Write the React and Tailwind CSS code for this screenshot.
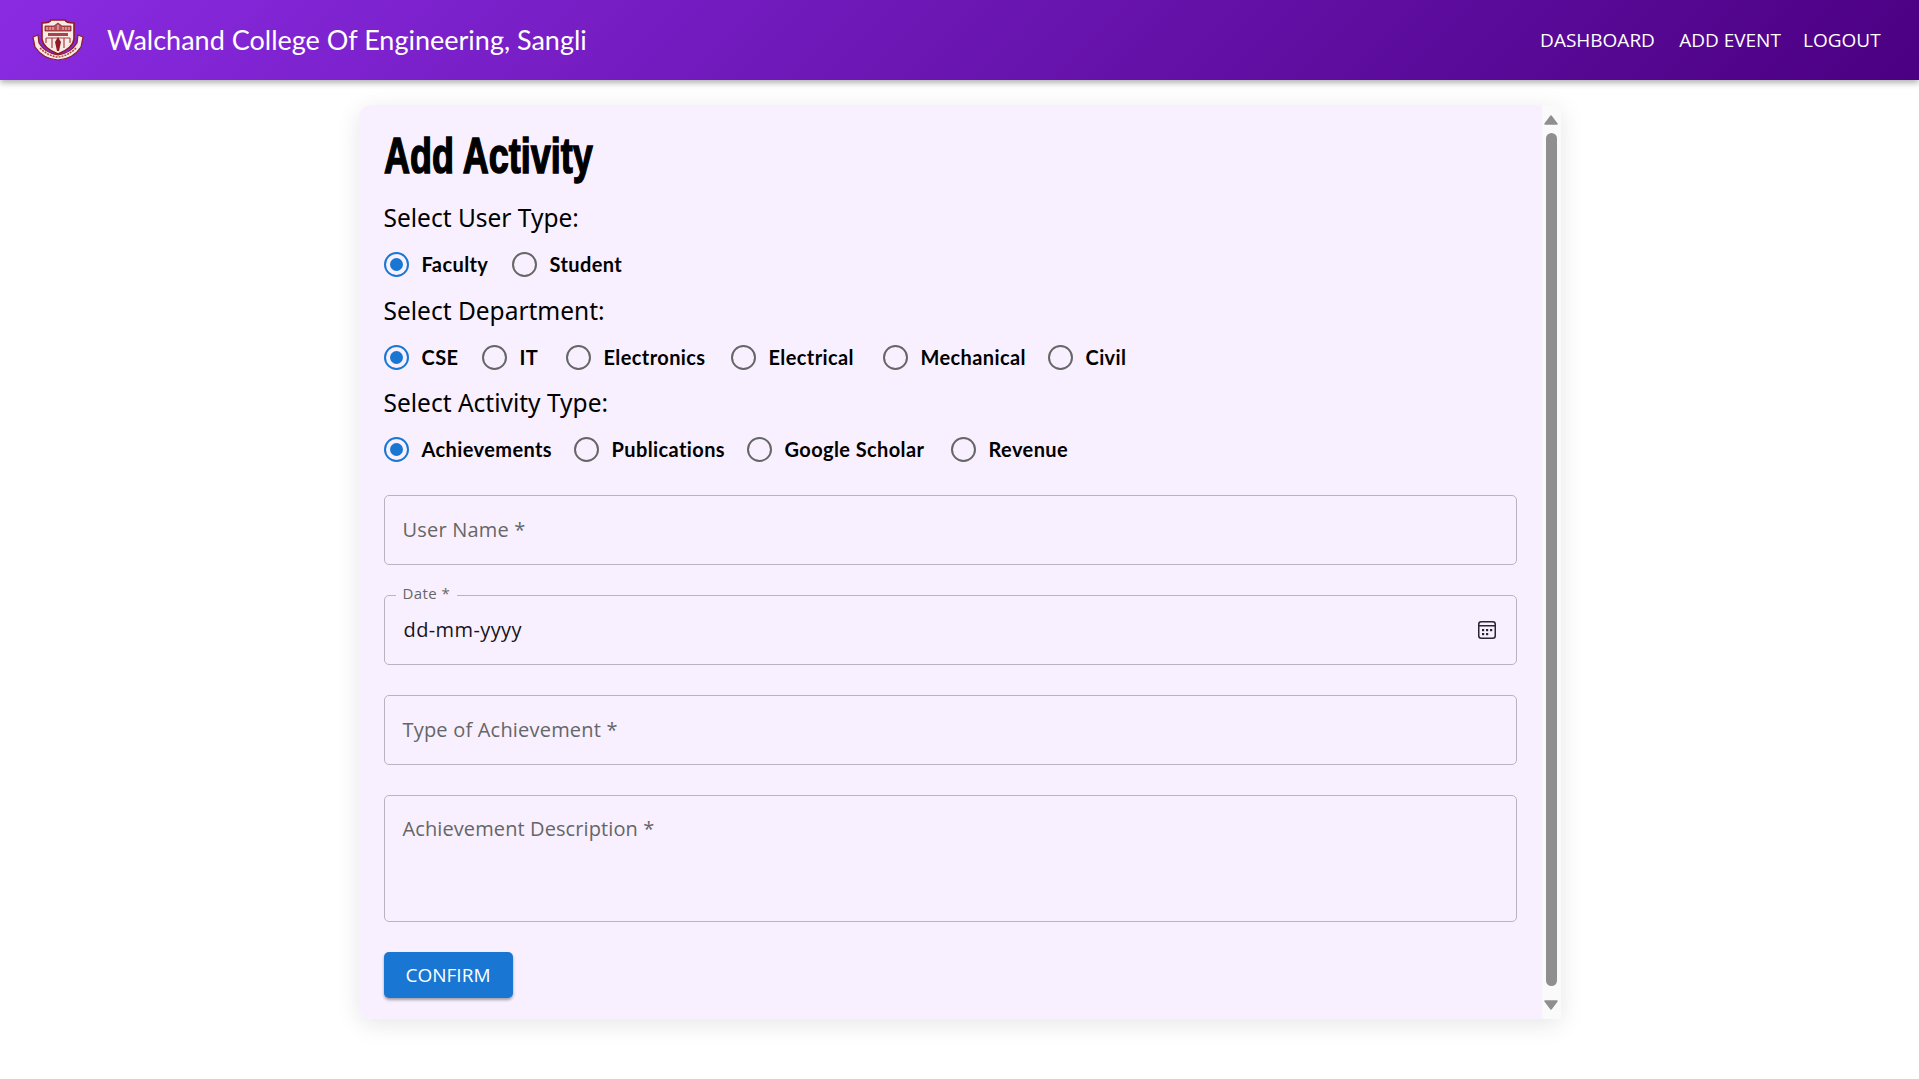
import React, { useState } from 'react';

const departments = [
    { name: 'CSE', width: 'w-[41px]' },
    { name: 'IT', width: 'w-[27px]' },
    { name: 'Electronics', width: 'w-[108px]' },
    { name: 'Electrical', width: 'w-[95px]' },
    { name: 'Mechanical', width: 'w-[108px]' },
    { name: 'Civil', width: 'w-[40px]' },
];

const activityTypes = [
    { name: 'Achievements', width: 'w-[133px]' },
    { name: 'Publications', width: 'w-[116px]' },
    { name: 'Google Scholar', width: 'w-[147px]' },
    { name: 'Revenue', width: 'w-[80px]' },
];

const userTypes = [
    { name: 'Faculty', width: 'w-[71px]' },
    { name: 'Student', width: 'w-[78px]' },
];

function Logo() {
    return (
        <svg width="54" height="42" viewBox="0 0 54 42" className="shrink-0">
            {/* ribbon */}
            <path d="M2 18 L7 16 L8 24 Q14 34 27 36 Q40 34 46 24 L47 16 L52 18 L50 28 Q42 40 27 41 Q12 40 4 28 Z" fill="#f6e8e4" stroke="#8e1b24" strokeWidth="1.2" />
            <path d="M9 29 Q17 37 27 38 Q37 37 45 29" fill="none" stroke="#a8434a" strokeWidth="1.5" strokeDasharray="2 1" />
            {/* shield */}
            <path d="M11 4 Q19 4 20 1 L34 1 Q35 4 43 4 L43 20 Q42 29 27 35 Q12 29 11 20 Z" fill="#f8ebe6" stroke="#8e1b24" strokeWidth="1.6" />
            {/* building */}
            <path d="M14 12 L14 7 L23 7 L27 4 L31 7 L40 7 L40 12 Z" fill="#b5545a" stroke="#8e1b24" strokeWidth="0.8" />
            <path d="M16 8 V11 M19 8 V11 M22 8 V11 M27 6 V11 M32 8 V11 M35 8 V11 M38 8 V11" stroke="#f8ebe6" strokeWidth="0.8" />
            <rect x="17" y="14" width="20" height="3" fill="#a8434a" />
            <path d="M15 19 H39 M15 19 V24 M39 19 V24 M21 19 V29 M33 19 V29" stroke="#a8434a" strokeWidth="1.2" fill="none" />
            <path d="M27 18 L30 23 L28 32 L26 32 L24 23 Z" fill="#8e1b24" />
        </svg>
    );
}

function CalendarIcon() {
    return (
        <svg width="18" height="18" viewBox="0 0 18 18" fill="none">
            <rect x="0.75" y="0.75" width="16.5" height="16.5" rx="2.5" stroke="#2a2630" strokeWidth="1.5" />
            <path d="M1 4.75 H17" stroke="#2a2630" strokeWidth="1.5" />
            <rect x="4" y="8" width="2.2" height="2.2" fill="#2a2630" />
            <rect x="8" y="8" width="2.2" height="2.2" fill="#2a2630" />
            <rect x="12" y="8" width="2.2" height="2.2" fill="#2a2630" />
            <rect x="4" y="12" width="2.2" height="2.2" fill="#2a2630" />
            <rect x="8" y="12" width="2.2" height="2.2" fill="#2a2630" />
        </svg>
    );
}

function RadioRow({ options, value, onChange, className }) {
    return (
        <div className={`flex h-[40px] items-center gap-[19px] ${className}`}>
            {options.map((option) => (
                <label key={option.name} className="flex cursor-pointer items-center gap-[13px]">
                    <input
                        type="radio"
                        className="sr-only"
                        checked={value === option.name}
                        onChange={() => onChange(option.name)}
                    />
                    {value === option.name ? (
                        <span className="flex h-[25px] w-[25px] items-center justify-center rounded-full border-[2.5px] border-[#1976d2]">
                            <span className="h-[13px] w-[13px] rounded-full bg-[#1976d2]" />
                        </span>
                    ) : (
                        <span className="h-[25px] w-[25px] rounded-full border-[2.5px] border-[#666666]" />
                    )}
                    <span className={`${option.width} whitespace-nowrap font-['Lato',sans-serif] text-[20px] font-bold tracking-[0.4px] text-black`}>{option.name}</span>
                </label>
            ))}
        </div>
    );
}

function SectionLabel({ children, className }) {
    return (
        <h2 className={`flex h-[36px] items-center whitespace-nowrap font-['Noto_Sans',sans-serif] text-[24.5px] text-black ${className}`}>
            {children}
        </h2>
    );
}

function Field({ label, className }) {
    return (
        <div className={`flex h-[70px] items-center rounded-[5px] border border-[#bab2c2] px-[18px] text-[20px] tracking-[0.2px] text-[#666666] ${className}`}>
            {label}
        </div>
    );
}

export default function App() {
    const [userType, setUserType] = useState('Faculty');
    const [department, setDepartment] = useState('CSE');
    const [activityType, setActivityType] = useState('Achievements');

    return (
        <div className="min-h-screen bg-white font-['Open_Sans',sans-serif]">
            <nav className="relative z-10 flex h-[80px] items-center justify-between bg-[linear-gradient(135deg,#8a2be2,#4b0082)] pl-[31px] pr-[39px] text-white shadow-[0_3px_6px_rgba(0,0,0,0.3)]">
                <div className="flex items-center gap-[22px]">
                    <Logo />
                    <span className="whitespace-nowrap font-['Lato',sans-serif] text-[27px]">Walchand College Of Engineering, Sangli</span>
                </div>
                <div className="flex items-center text-[19px]">
                    <a className="w-[115px] whitespace-nowrap text-center">DASHBOARD</a>
                    <a className="ml-[22px] w-[106px] whitespace-nowrap text-center">ADD EVENT</a>
                    <a className="ml-[20px] w-[77px] whitespace-nowrap text-center">LOGOUT</a>
                </div>
            </nav>

            <main className="pt-[25px]">
                <div className="mx-auto flex w-[1202px] overflow-hidden rounded-l-[12px] shadow-[0_5px_25px_rgba(0,0,0,0.1)]">
                    <div className="flex-1 bg-[#f8f0ff] px-[25px] pb-[21px] pt-[25px]">
                        <h1 className="flex h-[52px] origin-left scale-x-[0.72] items-center whitespace-nowrap font-['Liberation_Sans',sans-serif] text-[50px] font-bold text-black [-webkit-text-stroke:1.5px_black]">
                            Add Activity
                        </h1>

                        <SectionLabel className="mt-[18px]">Select User Type:</SectionLabel>
                        <RadioRow className="mt-[8px]" options={userTypes} value={userType} onChange={setUserType} />

                        <SectionLabel className="mt-[9px]">Select Department:</SectionLabel>
                        <RadioRow className="mt-[8px]" options={departments} value={department} onChange={setDepartment} />

                        <SectionLabel className="mt-[8px]">Select Activity Type:</SectionLabel>
                        <RadioRow className="mt-[8px]" options={activityTypes} value={activityType} onChange={setActivityType} />

                        <Field className="mt-[26px]" label="User Name *" />

                        <div className="relative mt-[30px] flex h-[70px] items-center justify-between rounded-[5px] border border-[#bab2c2] pl-[19px] pr-[20px] text-[20px] tracking-[0.4px] text-[#17141c]">
                            <span className="absolute -top-[13px] left-[11px] bg-[#f8f0ff] px-[7px] text-[15px] leading-[20px] text-[#666666]">Date *</span>
                            <span>dd-mm-yyyy</span>
                            <CalendarIcon />
                        </div>

                        <Field className="mt-[30px]" label="Type of Achievement *" />

                        <div className="mt-[30px] h-[127px] rounded-[5px] border border-[#bab2c2] px-[18px] pt-[18px] text-[20px] tracking-[0.1px] text-[#666666]">
                            Achievement Description *
                        </div>

                        <button className="mt-[30px] block h-[46px] w-[129px] rounded-[5px] bg-[#1976d2] text-[19px] text-white shadow-[0_2px_3px_rgba(0,0,0,0.35)]">
                            CONFIRM
                        </button>
                    </div>

                    {/* scrollbar */}
                    <div className="flex w-[19px] flex-col items-center bg-[#fafafa] pb-[9px] pt-[10px]">
                        <svg width="14" height="10" viewBox="0 0 14 10"><path d="M7 1 L13 9 H1 Z" fill="#8f8f8f" stroke="#8f8f8f" strokeWidth="1.5" strokeLinejoin="round" /></svg>
                        <div className="mb-[14px] mt-[8px] w-[11px] flex-1 rounded-t-[6px] rounded-b-[6px] bg-[#8f8f8f]" />
                        <svg width="14" height="10" viewBox="0 0 14 10"><path d="M1 1 H13 L7 9 Z" fill="#8f8f8f" stroke="#8f8f8f" strokeWidth="1.5" strokeLinejoin="round" /></svg>
                    </div>
                </div>
            </main>
        </div>
    );
}
